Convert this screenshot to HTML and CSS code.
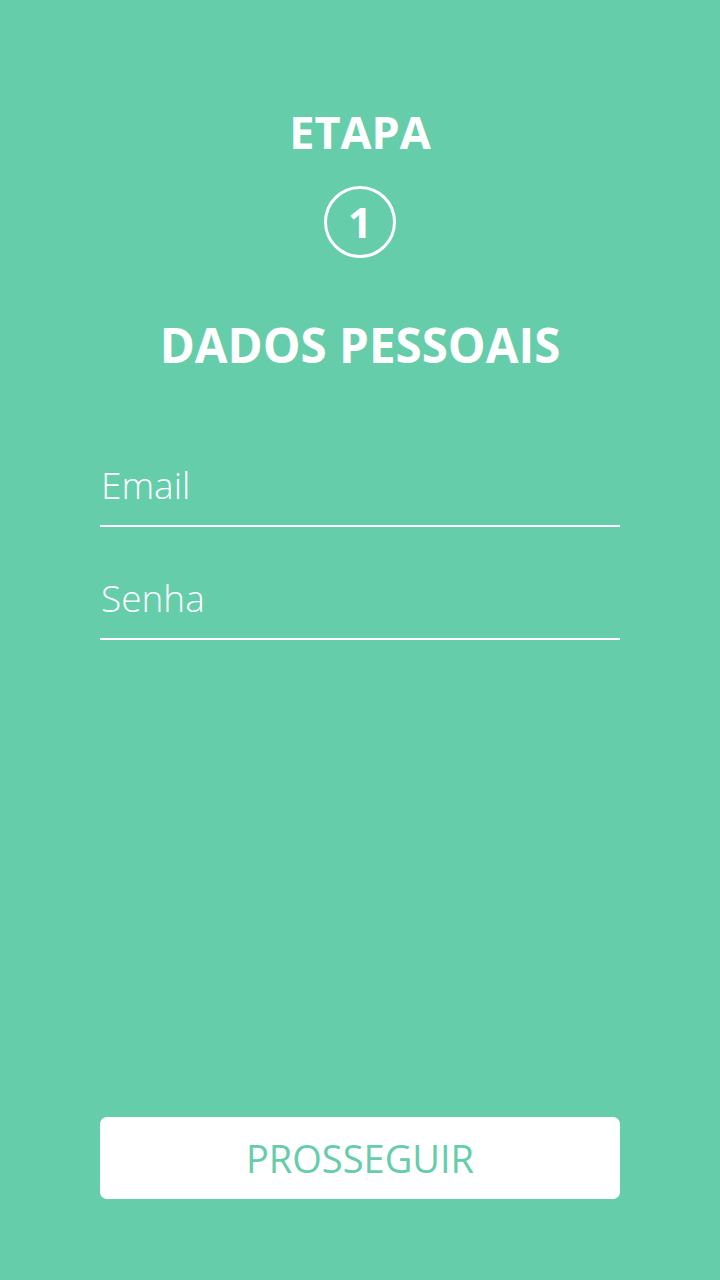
FILE: index.html
```html
<!DOCTYPE html>
<html lang="pt">
<head>
<meta charset="utf-8">
<link rel="stylesheet" href="styles.css">
</head>
<body>
<main class="screen">
  <header class="head">
    <h1 class="step-label">ETAPA</h1>
    <div class="step-num">1</div>
    <h2 class="title">DADOS PESSOAIS</h2>
  </header>
  <form class="form">
    <label class="field"><span class="placeholder">Email</span></label>
    <label class="field"><span class="placeholder">Senha</span></label>
  </form>
  <div class="actions">
    <button class="btn" type="button">PROSSEGUIR</button>
  </div>
</main>
</body>
</html>
```
FILE: styles.css
```css
html, body {
  margin: 0;
  padding: 0;
}
body {
  background: #66cdaa;
  font-family: "Open Sans", "Noto Sans", sans-serif;
  color: #fff;
}
.screen {
  width: 720px;
  height: 1280px;
  display: flex;
  flex-direction: column;
  align-items: center;
  box-sizing: border-box;
}
.head {
  display: flex;
  flex-direction: column;
  align-items: center;
  padding-top: 102px;
}
.step-label {
  margin: 0;
  font-size: 45px;
  font-weight: 700;
  line-height: 60px;
}
.step-num {
  margin-top: 24px;
  width: 66px;
  height: 66px;
  border: 3px solid #fff;
  border-radius: 50%;
  display: flex;
  align-items: center;
  justify-content: center;
  font-size: 42px;
  font-weight: 700;
  line-height: 1;
}
.title {
  margin: 57px 0 0;
  font-size: 47.5px;
  font-weight: 700;
  line-height: 60px;
}
.form {
  width: 520px;
  display: flex;
  flex-direction: column;
  margin-top: 71px;
  gap: 32px;
}
.field {
  display: block;
  border-bottom: 2px solid #fff;
  height: 81px;
  box-sizing: border-box;
  padding-top: 13px;
}
.placeholder {
  display: block;
  font-size: 37px;
  font-weight: 300;
  line-height: 52px;
  padding-left: 1px;
}
.actions {
  margin-top: auto;
  margin-bottom: 81px;
}
.btn {
  width: 520px;
  height: 82px;
  border: none;
  border-radius: 7px;
  background: #fff;
  color: #66cdaa;
  font-family: "Open Sans", "Noto Sans", sans-serif;
  font-size: 38px;
  font-weight: 400;
  padding: 0;
}
```
